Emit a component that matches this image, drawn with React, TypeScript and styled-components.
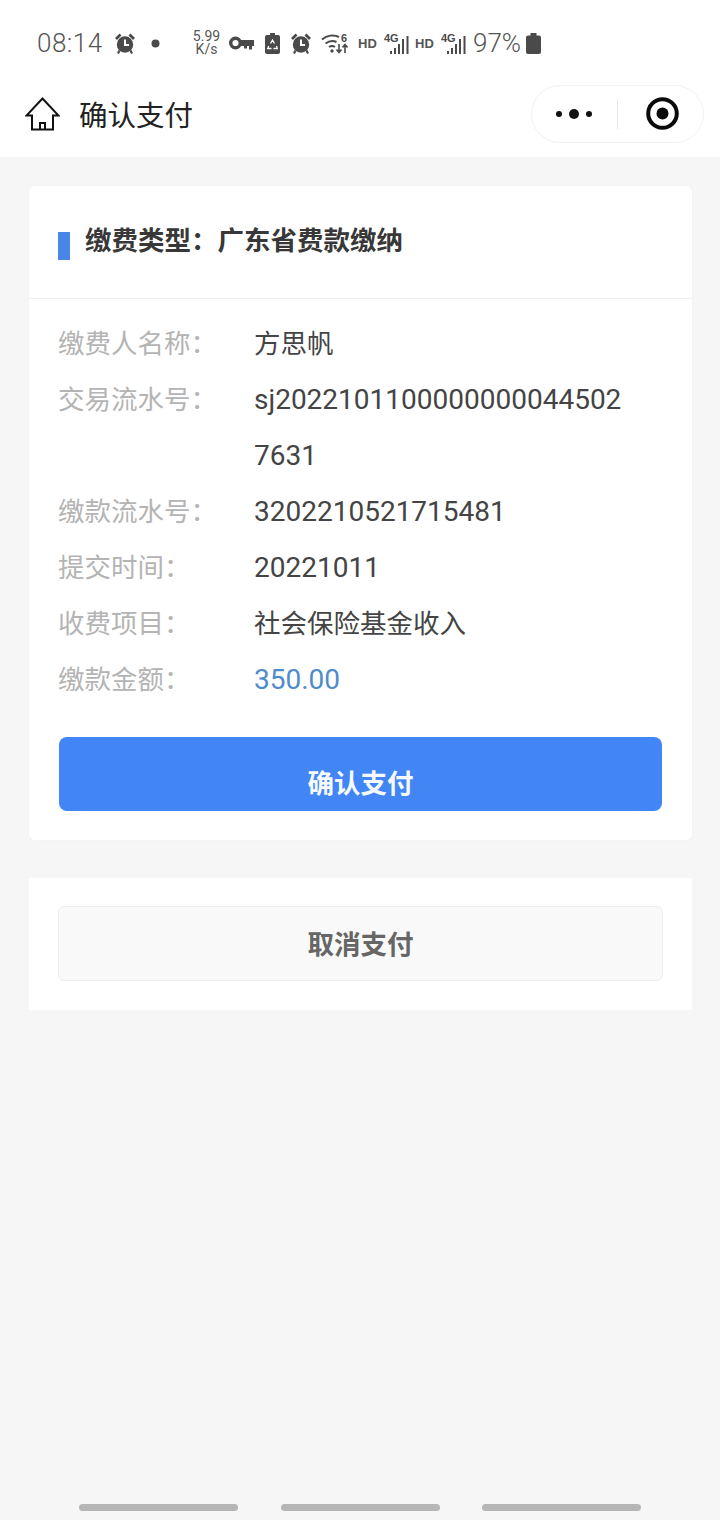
import React from 'react'
import styled, { createGlobalStyle } from 'styled-components'

const GlobalStyle = createGlobalStyle`
  html, body {
    margin: 0;
    padding: 0;
    background: #f6f6f6;
  }
  * {
    box-sizing: border-box;
  }
`

const Page = styled.div`
  width: 720px;
  height: 1520px;
  display: flex;
  flex-direction: column;
  background: #f6f6f6;
  font-family: 'Noto Sans CJK SC', 'Noto Sans', sans-serif;
  overflow: hidden;
`

const StatusBar = styled.div`
  height: 86px;
  flex: none;
  display: flex;
  align-items: center;
  padding-left: 37px;
  background: #fff;
  color: #555;
`

const Clock = styled.span`
  width: 78px;
  font-family: Roboto, sans-serif;
  font-size: 26px;
  font-weight: 300;
  letter-spacing: 0.5px;
`

const Speed = styled.span`
  margin-left: 32px;
  width: 29px;
  font-family: Roboto, sans-serif;
  font-size: 14px;
  line-height: 13px;
  text-align: center;
`

const Hd = styled.span<{ $gap: number }>`
  margin-left: ${p => p.$gap}px;
  width: 18px;
  font-family: 'Liberation Sans', sans-serif;
  font-size: 13px;
  font-weight: 700;
`

const Battery = styled.span`
  margin-left: 7px;
  width: 53px;
  font-family: Roboto, sans-serif;
  font-size: 26px;
  font-weight: 300;
`

const StatusIcon = styled.svg<{ $gap?: number }>`
  flex: none;
  display: block;
  margin-left: ${p => p.$gap ?? 0}px;
  color: #4a4a4a;
`

const NavBar = styled.div`
  height: 71px;
  flex: none;
  display: flex;
  align-items: center;
  padding: 0 16px 16px 25px;
  background: #fff;
`

const NavTitle = styled.h1`
  margin: 0 0 0 19px;
  font-size: 28.5px;
  font-weight: 400;
  line-height: 38px;
  color: #222;
`

const Capsule = styled.div`
  margin-left: auto;
  width: 173px;
  height: 58px;
  display: flex;
  align-items: center;
  border: 1px solid #f2f2f2;
  border-radius: 29px;
  background: #fff;
`

const MenuDots = styled.div`
  width: 85px;
  display: flex;
  align-items: center;
  justify-content: center;
  gap: 7px;
  padding-right: 2px;
`

const Dot = styled.i<{ $size: number }>`
  display: block;
  width: ${p => p.$size}px;
  height: ${p => p.$size}px;
  border-radius: 50%;
  background: #111;
`

const CapsuleDivider = styled.div`
  width: 1px;
  height: 30px;
  background: #e6e6e6;
`

const TargetSlot = styled.div`
  flex: 1;
  display: flex;
  justify-content: center;
  padding-left: 3px;
`

const Content = styled.main`
  flex: 1;
  display: flex;
  flex-direction: column;
  padding: 29px 28px 0 29px;
`

const InfoCard = styled.section`
  height: 654px;
  background: #fff;
  border-radius: 6px;
  box-shadow: 0 0 2px rgba(0, 0, 0, 0.04);
`

const CardHeader = styled.div`
  height: 113px;
  display: flex;
  align-items: flex-start;
  padding: 36px 29px 0;
  border-bottom: 1px solid #f0f0f0;
`

const HeaderMark = styled.div`
  width: 12px;
  height: 28px;
  margin-top: 10px;
  background: #4a86e8;
`

const HeaderTitle = styled.h2`
  margin: 0 0 0 15px;
  font-size: 26.5px;
  font-weight: 700;
  line-height: 34px;
  color: #383838;
`

const Rows = styled.div`
  padding: 16px 29px 0;
`

const Row = styled.div`
  display: flex;
  align-items: flex-start;
`

const Label = styled.div`
  width: 196px;
  height: 56px;
  flex: none;
  font-size: 26.5px;
  line-height: 53px;
  color: #b4b4b4;
`

const Value = styled.div`
  width: 376px;
  height: 56px;
  font-size: 26.5px;
  line-height: 53px;
  color: #444;
`

const NumberValue = styled.div<{ $accent?: boolean }>`
  width: 376px;
  padding-top: 1px;
  margin-bottom: -1px;
  font-family: Roboto, 'Noto Sans CJK SC', sans-serif;
  font-size: 28px;
  line-height: 56px;
  word-break: break-all;
  color: ${p => (p.$accent ? '#4f8ccb' : '#444')};
`

const PrimaryButton = styled.button`
  display: block;
  width: 603px;
  height: 74px;
  margin: 30px 0 0 30px;
  padding: 14px 0 0;
  border: none;
  border-radius: 8px;
  background: #4285f4;
  color: #f6faff;
  font-family: inherit;
  font-size: 26.5px;
  font-weight: 700;
`

const CancelCard = styled.section`
  height: 132px;
  margin-top: 38px;
  padding: 28px 29px 0 29px;
  background: #fff;
`

const CancelButton = styled.button`
  display: block;
  width: 605px;
  height: 75px;
  padding: 0 0 2px;
  border: 1px solid #eeeeee;
  border-radius: 6px;
  background: #f9f9f9;
  color: #666;
  font-family: inherit;
  font-size: 26.5px;
  font-weight: 700;
`

const GestureBars = styled.div`
  height: 16px;
  flex: none;
  display: flex;
  justify-content: space-between;
  padding: 0 79px;
`

const GestureBar = styled.div`
  width: 159px;
  height: 7px;
  border-radius: 4px;
  background: #b6b6b6;
`

const rows: { label: string; value: string; numeric?: boolean; accent?: boolean }[] = [
  { label: '缴费人名称：', value: '方思帆' },
  { label: '交易流水号：', value: 'sj202210110000000004450' + '27631', numeric: true },
  { label: '缴款流水号：', value: '3202210521715481', numeric: true },
  { label: '提交时间：', value: '20221011', numeric: true },
  { label: '收费项目：', value: '社会保险基金收入' },
  { label: '缴款金额：', value: '350.00', numeric: true, accent: true },
]

const AlarmIcon: React.FC<{ gap?: number }> = ({ gap }) => (
  <StatusIcon $gap={gap} width="20" height="21" viewBox="0 0 20 21">
    <circle cx="10" cy="11.5" r="8.2" fill="currentColor" />
    <path d="M10 6.5V12h4" fill="none" stroke="#fff" strokeWidth="2" />
    <path d="M1 6 5.5 1.5M19 6 14.5 1.5" stroke="currentColor" strokeWidth="2.8" />
    <path d="M4.5 17.5 3 20.5M15.5 17.5 17 20.5" stroke="currentColor" strokeWidth="2.2" />
  </StatusIcon>
)

const SignalIcon: React.FC<{ gap: number }> = ({ gap }) => (
  <StatusIcon $gap={gap} width="25" height="21" viewBox="0 0 25 21">
    <text x="0" y="9" fontFamily="Liberation Sans" fontWeight="700" fontSize="11" fill="currentColor">
      4G
    </text>
    <rect x="6" y="18" width="2" height="3" fill="currentColor" />
    <rect x="10" y="15" width="2" height="6" fill="currentColor" />
    <rect x="14" y="11" width="2" height="10" fill="currentColor" />
    <rect x="18" y="6" width="2" height="15" fill="currentColor" />
    <rect x="22.5" y="3" width="2" height="18" fill="currentColor" />
  </StatusIcon>
)

const StatusRow: React.FC = () => (
  <StatusBar>
    <Clock>08:14</Clock>
    <AlarmIcon />
    <StatusIcon $gap={16} width="9" height="9" viewBox="0 0 9 9">
      <circle cx="4.5" cy="4.5" r="4" fill="currentColor" />
    </StatusIcon>
    <Speed>
      5.99
      <br />
      K/s
    </Speed>
    <StatusIcon $gap={8} width="25" height="14" viewBox="0 0 25 14">
      <circle cx="6.5" cy="7" r="4.8" fill="none" stroke="currentColor" strokeWidth="3.4" />
      <path d="M11 4h14v6h-2v3.500h-3V10h-2v2.500h-3V10h-4z" fill="currentColor" />
    </StatusIcon>
    <StatusIcon $gap={11} width="15" height="21" viewBox="0 0 15 21">
      <path d="M5 0h5v2h3a2 2 0 0 1 2 2v15a2 2 0 0 1-2 2H2a2 2 0 0 1-2-2V4a2 2 0 0 1 2-2h3z" fill="currentColor" />
      <path d="M5.5 10.500 7.500 7l2 3.500M11.500 13l.8 2.500H8.500M6.500 15.500H2.700L3.800 13" fill="none" stroke="#fff" strokeWidth="1.3" />
    </StatusIcon>
    <AlarmIcon gap={11} />
    <StatusIcon $gap={10} width="28" height="21" viewBox="0 0 28 21">
      <path d="M1 6.500C6 2 13 1.500 18 4M4.500 10.500C8 8 12 7.500 15.500 9M8 14c2-1.400 4-1.400 6 0" fill="none" stroke="currentColor" strokeWidth="2" />
      <circle cx="11" cy="18" r="1.7" fill="currentColor" />
      <text x="20" y="9" fontFamily="Liberation Sans" fontWeight="700" fontSize="11" fill="currentColor">
        6
      </text>
      <path d="M18 11v8M15.500 16.500l2.500 3 2.500-3M24 20v-8M21.500 14.500l2.500-3 2.500 3" fill="none" stroke="currentColor" strokeWidth="1.6" />
    </StatusIcon>
    <Hd $gap={9}>HD</Hd>
    <SignalIcon gap={8} />
    <Hd $gap={6}>HD</Hd>
    <SignalIcon gap={8} />
    <Battery>97%</Battery>
    <StatusIcon width="15" height="21" viewBox="0 0 15 21">
      <path d="M4.500 0h6v2.500H13a2 2 0 0 1 2 2V19a2 2 0 0 1-2 2H2a2 2 0 0 1-2-2V4.500a2 2 0 0 1 2-2h2.500z" fill="currentColor" />
    </StatusIcon>
  </StatusBar>
)

const App: React.FC = () => (
  <Page>
    <GlobalStyle />
    <StatusRow />
    <NavBar>
      <svg width="35" height="34" viewBox="0 0 35 34">
        <path
          d="M17.500 1.500 1.500 18.500H7V32.500H28V18.500H33.500ZM15 32.500V26H20V32.500"
          fill="none"
          stroke="#111"
          strokeWidth="2"
        />
      </svg>
      <NavTitle>确认支付</NavTitle>
      <Capsule>
        <MenuDots>
          <Dot $size={6} />
          <Dot $size={10} />
          <Dot $size={6} />
        </MenuDots>
        <CapsuleDivider />
        <TargetSlot>
          <svg width="33" height="33" viewBox="0 0 33 33">
            <circle cx="16.5" cy="16.5" r="14.3" fill="none" stroke="#0a0a0a" strokeWidth="4" />
            <circle cx="16.5" cy="16.5" r="6" fill="#0a0a0a" />
          </svg>
        </TargetSlot>
      </Capsule>
    </NavBar>
    <Content>
      <InfoCard>
        <CardHeader>
          <HeaderMark />
          <HeaderTitle>缴费类型：广东省费款缴纳</HeaderTitle>
        </CardHeader>
        <Rows>
          {rows.map(row =>
            row.numeric ? (
              <Row key={row.label}>
                <Label>{row.label}</Label>
                <NumberValue $accent={row.accent}>{row.value}</NumberValue>
              </Row>
            ) : (
              <Row key={row.label}>
                <Label>{row.label}</Label>
                <Value>{row.value}</Value>
              </Row>
            ),
          )}
        </Rows>
        <PrimaryButton>确认支付</PrimaryButton>
      </InfoCard>
      <CancelCard>
        <CancelButton>取消支付</CancelButton>
      </CancelCard>
    </Content>
    <GestureBars>
      <GestureBar />
      <GestureBar />
      <GestureBar />
    </GestureBars>
  </Page>
)

export default App
